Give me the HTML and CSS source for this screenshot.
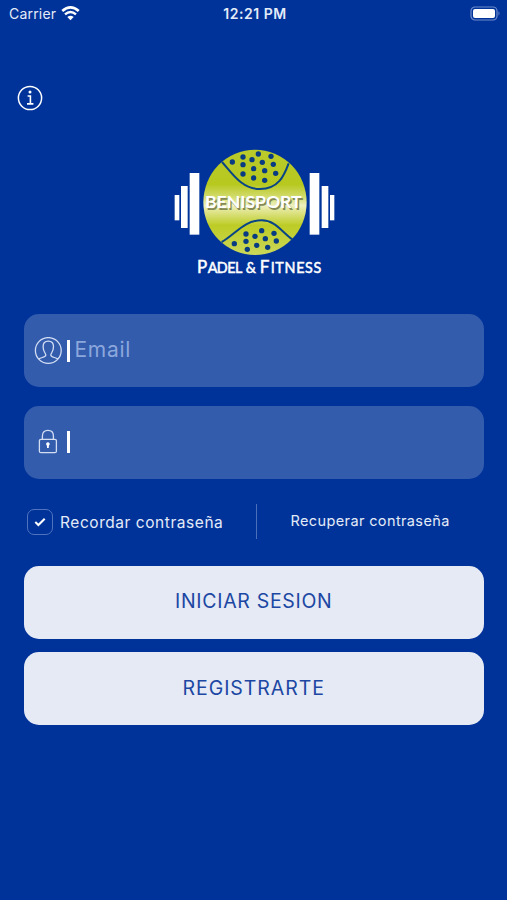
FILE: index.html
```
<!DOCTYPE html>
<html lang="es">
<head>
    <meta charset="UTF-8">
    <meta name="viewport" content="width=device-width, initial-scale=1.0">
    <title>BeniSport</title>
    <link rel="stylesheet" href="styles.css">
</head>
<body>
    <header class="status-bar">
        <div class="carrier">
            <span>Carrier</span>
            <svg class="wifi" viewBox="0 0 18 14">
                <path d="M1.2 4.7 Q9 -2.2 16.8 4.7" fill="none" stroke="#fff" stroke-width="2.6"/>
                <path d="M3.8 7.8 Q9 3.2 14.2 7.8" fill="none" stroke="#fff" stroke-width="2.3"/>
                <path d="M6 10.3 Q9 7.8 12 10.3 L9 13.4 Z" fill="#fff"/>
            </svg>
        </div>
        <span class="time">12:21 PM</span>
        <svg class="battery" viewBox="0 0 31 15">
            <rect x="1" y="1" width="26" height="13" rx="4" fill="none" stroke="#6d8ccb" stroke-width="1.2"/>
            <rect x="3" y="3" width="22" height="9" rx="2" fill="#fff"/>
            <path d="M28.5 5.3 Q30.5 7.5 28.5 9.7 Z" fill="#6d8ccb"/>
        </svg>
    </header>

    <a class="info" href="#" aria-label="Info">
        <svg viewBox="0 0 26 26" fill="none" stroke="#fff">
            <circle cx="13" cy="13" r="11.6" stroke-width="1.5"/>
            <circle cx="13" cy="6.9" r="1.5" fill="#fff" stroke="none"/>
            <path d="M10.6 11 H13.4 V18.6 M10 18.9 H16.4" stroke-width="1.6"/>
        </svg>
    </a>

    <svg class="logo" viewBox="0 0 540 435">
        <defs>
            <linearGradient id="ball" x1="0" y1="0" x2="0" y2="1">
                <stop offset="0" stop-color="#b9ca2b"/>
                <stop offset="0.33" stop-color="#b7c81f"/>
                <stop offset="0.45" stop-color="#d3dc70"/>
                <stop offset="0.53" stop-color="#eef0bd"/>
                <stop offset="0.61" stop-color="#d9e07a"/>
                <stop offset="0.72" stop-color="#bdcc25"/>
                <stop offset="1" stop-color="#cbd75a"/>
            </linearGradient>
        </defs>
        <g fill="#fff">
            <rect x="29" y="165" width="14" height="76"/>
            <rect x="48" y="138" width="20" height="126"/>
            <rect x="74" y="99" width="29" height="185"/>
            <rect x="434" y="99" width="29" height="185"/>
            <rect x="470" y="138" width="20" height="126"/>
            <rect x="495" y="165" width="13" height="76"/>
        </g>
        <ellipse cx="270" cy="187" rx="155" ry="158" fill="url(#ball)"/>
        <g fill="none" stroke="#084486" stroke-width="6">
            <path d="M171 66 C200 98 230 148 285 147 C340 147 357 108 371 70"/>
            <path d="M170 306 C210 285 235 241 290 241 C332 241 350 276 382 298"/>
        </g>
        <g fill="#083b82">
            <circle cx="280" cy="42" r="8"/><circle cx="318" cy="49" r="8"/>
            <circle cx="234" cy="51" r="8"/><circle cx="261" cy="59" r="8"/>
            <circle cx="202" cy="66" r="8"/><circle cx="292" cy="67" r="8"/>
            <circle cx="234" cy="74" r="8"/><circle cx="325" cy="73" r="8"/>
            <circle cx="266" cy="86" r="8"/><circle cx="299" cy="92" r="8"/>
            <circle cx="234" cy="102" r="8"/><circle cx="332" cy="100" r="8"/>
            <circle cx="266" cy="114" r="8"/><circle cx="299" cy="121" r="8"/>
            <circle cx="290" cy="272" r="8"/><circle cx="243" cy="282" r="8"/>
            <circle cx="327" cy="280" r="8"/><circle cx="270" cy="289" r="8"/>
            <circle cx="301" cy="296" r="8"/><circle cx="243" cy="304" r="8"/>
            <circle cx="334" cy="303" r="8"/><circle cx="208" cy="311" r="8"/>
            <circle cx="275" cy="316" r="8"/><circle cx="308" cy="322" r="8"/>
            <circle cx="247" cy="328" r="8"/>
        </g>
        <text class="logo-name logo-shadow" x="124" y="209" textLength="290">BENISPORT</text>
        <text class="logo-name" x="120" y="205" textLength="290">BENISPORT</text>
        <text class="logo-tag" y="398"><tspan class="logo-cap" x="96">P</tspan><tspan x="128" textLength="104">ADEL</tspan><tspan x="242">&amp;</tspan><tspan class="logo-cap" x="284">F</tspan><tspan x="317" textLength="152">ITNESS</tspan></text>
    </svg>

    <form class="login">
        <label class="field">
            <svg class="icon" viewBox="0 0 28 28" fill="none" stroke="#d3def3" stroke-width="1.3">
                <circle cx="14.3" cy="13.5" r="12.9"/>
                <path d="M4.7 22.1 C7.5 20.2 11.8 20.2 11.8 17.9 C11.8 16.3 9.1 14.7 9.1 9.8 C9.1 6 11.2 4.2 14.3 4.2 C17.4 4.2 19.5 6 19.5 9.8 C19.5 14.7 16.8 16.3 16.8 17.9 C16.8 20.2 21.1 20.2 23.9 22.1"/>
            </svg>
            <span class="bar"></span>
            <input type="text" placeholder="Email">
        </label>
        <label class="field">
            <svg class="icon" viewBox="0 0 28 28" fill="none" stroke="#d3def3" stroke-width="1.3">
                <rect x="5.4" y="11.3" width="17" height="13.4" rx="1.5"/>
                <path d="M8.4 11.1 V8 C8.4 4.4 10.6 2.3 13.9 2.3 C17.2 2.3 19.4 4.4 19.4 8 V11.1"/>
                <path d="M12.2 16.6 A1.8 1.8 0 1 1 15.6 16.6 L14.8 17.9 V20.1 H13 V17.9 Z" fill="#fff" stroke="none"/>
            </svg>
            <span class="bar"></span>
            <input type="password" aria-label="Contraseña">
        </label>

        <div class="options">
            <div class="remember">
                <span class="checkbox">
                    <svg viewBox="0 0 12 10"><path d="M1.3 5 L4.4 8 L10.7 1.7" fill="none" stroke="#fff" stroke-width="2"/></svg>
                </span>
                <span class="remember-text">Recordar contraseña</span>
            </div>
            <a class="recover" href="#">Recuperar contraseña</a>
        </div>

        <button type="button" class="btn">INICIAR SESION</button>
        <button type="button" class="btn btn-register">REGISTRARTE</button>
    </form>
</body>
</html>
```
FILE: styles.css
```
* {
    box-sizing: border-box;
}

body {
    margin: 0;
    height: 900px;
    overflow: hidden;
    background-color: #003399;
    color: #e4ebf8;
    font-family: Inter, "Open Sans", sans-serif;
}

a {
    color: inherit;
    text-decoration: none;
}

svg {
    display: block;
}

.status-bar {
    display: grid;
    grid-template-columns: 1fr auto 1fr;
    align-items: center;
    height: 27px;
    padding: 0 6px 0 9px;
    font-size: 14px;
}

.carrier {
    display: flex;
    align-items: center;
    gap: 5px;
    letter-spacing: 0.2px;
}

.wifi {
    width: 19px;
    height: 15px;
}

.time {
    font-weight: 600;
    font-size: 14px;
    letter-spacing: 0.55px;
}

.battery {
    justify-self: end;
    width: 31px;
    height: 15px;
}

.info {
    display: block;
    width: 26px;
    margin: 57.5px 0 0 17px;
}

.logo {
    width: 180px;
    height: 145px;
    margin: 29.5px 0 0 165px;
}

.logo-name {
    font-family: Lato, sans-serif;
    font-size: 53px;
    font-weight: 700;
    fill: #fff;
}

.logo-shadow {
    fill: #858a55;
}

.logo-tag {
    font-family: Lato, sans-serif;
    font-size: 43px;
    fill: #fff;
    stroke: #fff;
    stroke-width: 1.5px;
}

.logo-cap {
    font-size: 51px;
}

.login {
    margin: 29px 23.5px 0 24px;
}

.field {
    display: flex;
    align-items: center;
    height: 73px;
    margin-bottom: 18.5px;
    padding: 0 10px;
    border-radius: 15px;
    background-color: #335cad;
}

.icon {
    width: 28px;
    height: 28px;
}

.bar {
    width: 2.5px;
    height: 22px;
    margin: 0 5px 0 5px;
    background-color: #fff;
}

.field input {
    flex: 1;
    min-width: 0;
    padding: 0 0 2px;
    border: none;
    outline: none;
    background: none;
    color: #fff;
    font-family: inherit;
    font-size: 21px;
    letter-spacing: 0.7px;
}

.field input::placeholder {
    color: #8ba7dc;
    opacity: 1;
}

.options {
    display: flex;
    align-items: center;
    height: 35px;
    margin: 25.5px 0 26.5px;
}

.remember {
    display: flex;
    align-items: center;
    width: 232.5px;
    height: 35px;
    padding-left: 3px;
    border-right: 1.5px solid #4a70ba;
}

.checkbox {
    display: flex;
    align-items: center;
    justify-content: center;
    width: 26px;
    height: 26px;
    margin-right: 7px;
    border: 1px solid #4f74bd;
    border-radius: 7px;
}

.checkbox svg {
    width: 12px;
    height: 10px;
}

.remember-text {
    padding-top: 1px;
    font-size: 15.5px;
    letter-spacing: 0.55px;
}

.recover {
    padding: 0 0 2px 34px;
    font-size: 14.5px;
    letter-spacing: 0.38px;
}

.btn {
    display: block;
    width: 100%;
    height: 73px;
    margin-bottom: 13.5px;
    padding: 0 0 2px;
    border: none;
    border-radius: 15px;
    background-color: #e5eaf5;
    color: #1c47a3;
    font-family: inherit;
    font-size: 19.5px;
    letter-spacing: 0.7px;
}

.btn-register {
    padding: 0 0 1px;
    letter-spacing: 0.95px;
}
```
